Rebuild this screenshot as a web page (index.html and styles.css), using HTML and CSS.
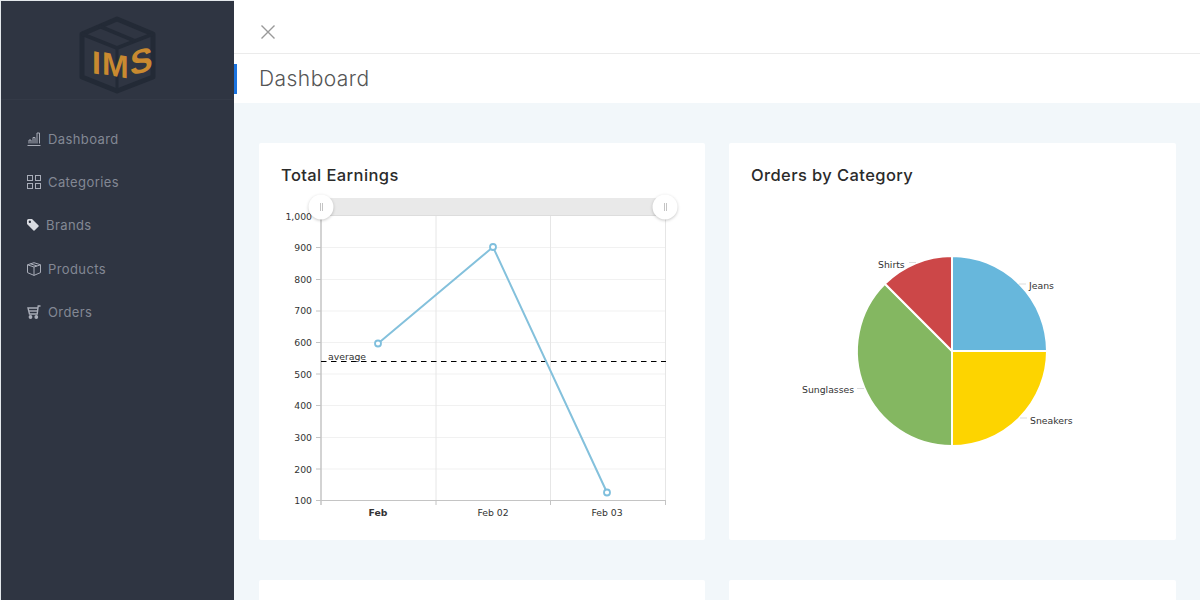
FILE: index.html
```html
<!DOCTYPE html>
<html lang="en">
<head>
    <meta charset="UTF-8">
    <meta name="viewport" content="width=device-width, initial-scale=1.0">
    <title>IMS Dashboard</title>
    <link rel="stylesheet" href="styles.css">
</head>
<body>
    <div class="app">
        <aside class="sidebar">
            <div class="logo">
                <svg class="logo-box" width="78" height="78" viewBox="79 15 78 78">
                    <g fill="none" stroke="#232a36" stroke-width="5" stroke-linejoin="round">
                        <path d="M117 18 L153 33 V76 L117 90 L82 76 V33 Z"/>
                        <path d="M82 33 L117 47 L153 33" stroke-width="4"/>
                        <path d="M99 25 L135 40" stroke-width="4"/>
                        <path d="M117 47 V90" stroke-width="3"/>
                    </g>
                    <g class="logo-text">
                        <text transform="translate(92 72) skewY(10)">I</text>
                        <text transform="translate(102 73) skewY(10)">M</text>
                        <text class="logo-s" transform="translate(130 75) skewY(-16)">S</text>
                    </g>
                </svg>
            </div>
            <nav class="menu">
                <a class="menu-item" href="#">
                    <svg class="icon" viewBox="0 0 14 14" fill="none" stroke="currentColor">
                        <path d="M0.5 13.500 H13.500 M2 11.500 V8 H4 V11.500 M6 11.500 V5.500 H8 V11.500 M10 11.500 V1 H12.500 V11.500"/>
                    </svg>
                    Dashboard
                </a>
                <a class="menu-item" href="#">
                    <svg class="icon" viewBox="0 0 14 14" fill="none" stroke="currentColor">
                        <rect x="0.5" y="0.5" width="5" height="5"/>
                        <rect x="8.5" y="0.5" width="5" height="5"/>
                        <rect x="0.5" y="8.5" width="5" height="5"/>
                        <rect x="8.5" y="8.5" width="5" height="5"/>
                    </svg>
                    Categories
                </a>
                <a class="menu-item" href="#">
                    <svg class="icon icon-tag" viewBox="0 0 12 12">
                        <path d="M0 1.500 Q0 0 1.500 0 H5 L11.600 6.600 Q12 7 11.600 7.500 L7.500 11.600 Q7 12 6.500 11.600 L0 5 Z M2.800 1.600 A1.200 1.200 0 1 0 2.900 1.600 Z" fill="#d9dbe1" fill-rule="evenodd"/>
                    </svg>
                    Brands
                </a>
                <a class="menu-item" href="#">
                    <svg class="icon" viewBox="0 0 14 14" fill="none" stroke="currentColor" stroke-linejoin="round">
                        <path d="M7 0.700 L13.500 2.800 V10.600 L7 13.400 L0.500 10.600 V2.800 Z"/>
                        <path d="M0.500 2.800 L7 5 L13.500 2.800 M7 5 V13.400 M3.500 1.800 L10 4"/>
                    </svg>
                    Products
                </a>
                <a class="menu-item" href="#">
                    <svg class="icon" viewBox="0 0 14 14" fill="none" stroke="currentColor" stroke-width="1.4">
                        <path d="M13.500 1 H11.200 L10.200 9 H2.500 L1 3 H10.800"/>
                        <path d="M2 6 H10.400"/>
                        <circle cx="3.500" cy="12" r="1.200" fill="currentColor"/>
                        <circle cx="9.300" cy="12" r="1.200" fill="currentColor"/>
                    </svg>
                    Orders
                </a>
            </nav>
        </aside>

        <main class="main">
            <header class="topbar">
                <svg class="close-icon" width="14" height="14" viewBox="0 0 14 14" fill="none" stroke="#999" stroke-width="1.4">
                    <path d="M0.500 0.500 L13.500 13.500 M13.500 0.500 L0.500 13.500"/>
                </svg>
            </header>
            <div class="titlebar">
                <span class="title-mark"></span>
                <h1>Dashboard</h1>
            </div>

            <div class="content">
                <section class="card">
                    <h2>Total Earnings</h2>
                    <svg class="chart" viewBox="259 190 446 350">
                        <!-- grid -->
                        <g stroke="#f1f1f1">
                            <path d="M321 247.500 H666 M321 279.500 H666 M321 311 H666 M321 342.500 H666 M321 374 H666 M321 405.500 H666 M321 437.500 H666 M321 469 H666"/>
                        </g>
                        <g stroke="#e6e6e6">
                            <path d="M436 216 V500 M550.500 216 V500 M665.500 216 V500"/>
                        </g>
                        <!-- axes -->
                        <g stroke="#c4c4c4">
                            <path d="M321 216 V505" stroke-width="1.500"/>
                            <path d="M321 500.500 H666"/>
                            <path d="M316 216.500 H321 M316 247.500 H321 M316 279.500 H321 M316 311 H321 M316 342.500 H321 M316 374 H321 M316 405.500 H321 M316 437.500 H321 M316 469 H321 M316 500.500 H321"/>
                            <path d="M436 500 V505 M550.500 500 V505 M665.500 500 V505"/>
                        </g>
                        <g class="axis-label" text-anchor="end">
                            <text x="312" y="220">1,000</text>
                            <text x="312" y="251">900</text>
                            <text x="312" y="283">800</text>
                            <text x="312" y="314">700</text>
                            <text x="312" y="346">600</text>
                            <text x="312" y="378">500</text>
                            <text x="312" y="409">400</text>
                            <text x="312" y="441">300</text>
                            <text x="312" y="473">200</text>
                            <text x="312" y="504">100</text>
                        </g>
                        <g class="axis-label" text-anchor="middle">
                            <text x="378" y="516" font-weight="bold">Feb</text>
                            <text x="493" y="516">Feb 02</text>
                            <text x="607" y="516">Feb 03</text>
                        </g>
                        <!-- average guide -->
                        <path d="M321 361.500 H666" stroke="#000" stroke-dasharray="5.500 4.500"/>
                        <text class="axis-label" x="328" y="359.500">average</text>
                        <!-- series -->
                        <path d="M378 343.500 L493 247 L607 492.500" fill="none" stroke="#84c1dc" stroke-width="2"/>
                        <g fill="#fff" stroke="#7fbfdd" stroke-width="1.800">
                            <circle cx="378" cy="343.500" r="3"/>
                            <circle cx="493" cy="247" r="3"/>
                            <circle cx="607" cy="492.500" r="3"/>
                        </g>
                        <!-- scrollbar -->
                        <rect x="321" y="198" width="345" height="17" fill="#e9e9e9"/>
                        <path d="M321 215.500 H666" stroke="#ddd"/>
                        <g class="grip">
                            <circle cx="321" cy="207" r="12.500"/>
                            <circle cx="665" cy="207" r="12.500"/>
                        </g>
                        <path d="M320.500 203 V211 M322.500 203 V211 M664.500 203 V211 M666.500 203 V211" stroke="#b5b5b5" stroke-width="0.800"/>
                    </svg>
                </section>

                <section class="card">
                    <h2>Orders by Category</h2>
                    <svg class="chart" viewBox="729 190 447 350">
                        <g stroke="#fff" stroke-width="2" stroke-linejoin="round">
                            <path d="M952 351 V256 A95 95 0 0 1 1047 351 Z" fill="#67b7dc"/>
                            <path d="M952 351 H1047 A95 95 0 0 1 952 446 Z" fill="#fdd400"/>
                            <path d="M952 351 V446 A95 95 0 0 1 884.800 283.800 Z" fill="#84b761"/>
                            <path d="M952 351 L884.800 283.800 A95 95 0 0 1 952 256 Z" fill="#cc4748"/>
                        </g>
                        <path d="M1019 284 H1026 M1020 418 H1027 M857 388.500 H864 M909 262.500 H916" stroke="#ddd"/>
                        <g class="axis-label">
                            <text x="1029" y="289">Jeans</text>
                            <text x="1030" y="424">Sneakers</text>
                            <text x="802" y="393">Sunglasses</text>
                            <text x="878" y="268">Shirts</text>
                        </g>
                    </svg>
                </section>

                <section class="card"></section>
                <section class="card"></section>
            </div>
        </main>
    </div>
</body>
</html>
```

FILE: styles.css
```css
* {
    box-sizing: border-box;
}
html, body {
    margin: 0;
    height: 100%;
    overflow: hidden;
}
body {
    font-family: Inter, "Noto Sans", sans-serif;
    background-color: #f2f7fa;
}
.app {
    display: flex;
    height: 600px;
    overflow: hidden;
}
.sidebar {
    flex: 0 0 234px;
    background-color: #2f3542;
    border-left: 1px solid #e4e8ec;
    border-top: 1px solid #e4e8ec;
}
.logo {
    height: 99px;
    display: flex;
    justify-content: flex-start;
    padding: 15px 0 0 78px;
    border-bottom: 1px solid #343a47;
}
.logo-box {
    display: block;
}
.logo-text text {
    font-family: "Liberation Sans", sans-serif;
    font-weight: bold;
    font-size: 32px;
    fill: #c98a30;
}
.logo-text .logo-s {
    font-size: 34px;
}
.menu {
    padding-top: 17px;
}
.menu-item {
    height: 43.3px;
    padding-left: 26px;
    display: flex;
    align-items: center;
    gap: 7px;
    font-size: 13px;
    letter-spacing: 0.4px;
    color: #838894;
    text-decoration: none;
}
.icon {
    flex: 0 0 14px;
    width: 14px;
    height: 14px;
    color: #a9adb8;
}
.icon-tag {
    flex-basis: 12px;
    width: 12px;
    height: 12px;
}
.main {
    flex: 1;
    min-width: 0;
}
.topbar {
    height: 54px;
    padding: 25px 0 0 27px;
    background-color: #fff;
    border-bottom: 1px solid #ebebeb;
}
.close-icon {
    display: block;
}
.titlebar {
    height: 49px;
    display: flex;
    align-items: center;
    gap: 22px;
    background-color: #fff;
}
.title-mark {
    width: 3px;
    height: 30px;
    background-color: #1a73e0;
}
h1 {
    margin: 0;
    font-size: 21px;
    font-weight: 300;
    letter-spacing: 0.45px;
    color: #555;
}
.content {
    display: grid;
    grid-template-columns: 446px 447px;
    grid-auto-rows: 397px;
    gap: 40px 24px;
    padding: 40px 0 0 25px;
}
.card {
    background-color: #fff;
    border-radius: 2px;
    padding: 20px 0 0;
}
h2 {
    margin: 0;
    height: 27px;
    padding-left: 22px;
    font-size: 16.5px;
    line-height: 24px;
    font-weight: 500;
    letter-spacing: 0.4px;
    color: #2b2b2b;
}
.chart {
    display: block;
    width: 100%;
    height: 350px;
}
.axis-label {
    font-family: "DejaVu Sans", sans-serif;
    font-size: 9.3px;
    fill: #333;
}
.grip circle {
    fill: #fff;
    filter: drop-shadow(0 1px 1.5px rgba(0, 0, 0, 0.22));
}
```
